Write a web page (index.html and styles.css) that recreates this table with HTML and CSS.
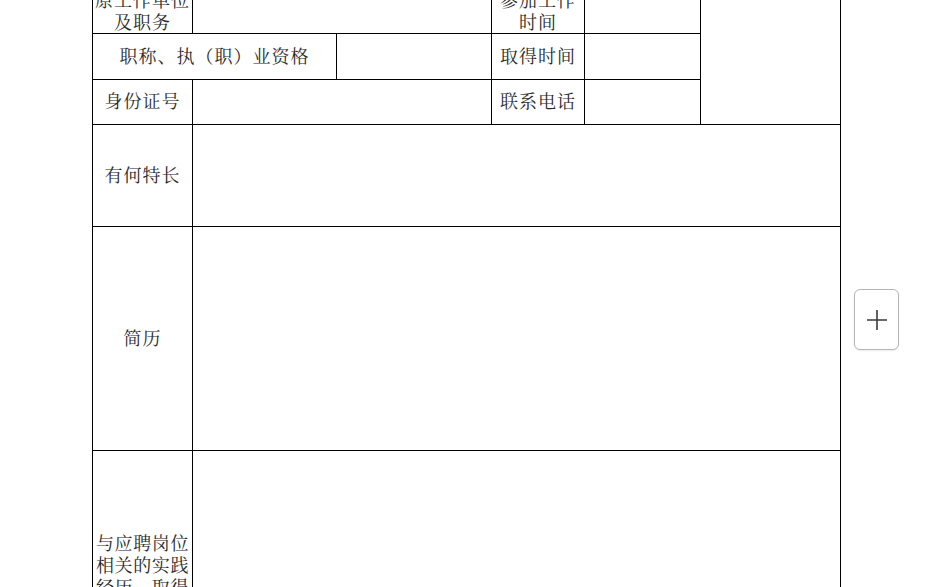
FILE: index.html
```html
<!DOCTYPE html>
<html lang="zh">
<head>
<meta charset="utf-8">
<title>应聘登记表</title>
<link rel="stylesheet" href="styles.css">
</head>
<body>
<div class="page">
  <table class="form">
    <colgroup>
      <col class="c1"><col class="c2"><col class="c3"><col class="c4"><col class="c5"><col class="c6">
    </colgroup>
    <tr class="r1">
      <td class="label">原工作单位<br>及职务</td>
      <td colspan="2"></td>
      <td class="label">参加工作<br>时间</td>
      <td></td>
      <td rowspan="3"></td>
    </tr>
    <tr class="r2">
      <td class="label" colspan="2">职称、执（职）业资格</td>
      <td></td>
      <td class="label">取得时间</td>
      <td></td>
    </tr>
    <tr class="r3">
      <td class="label">身份证号</td>
      <td colspan="2"></td>
      <td class="label">联系电话</td>
      <td></td>
    </tr>
    <tr class="r4">
      <td class="label">有何特长</td>
      <td colspan="5"></td>
    </tr>
    <tr class="r5">
      <td class="label">简历</td>
      <td colspan="5"></td>
    </tr>
    <tr class="r6">
      <td class="label tight">与应聘岗位<br>相关的实践<br>经历、取得<br>的成绩</td>
      <td colspan="5"></td>
    </tr>
  </table>
  <button class="add" type="button" aria-label="添加">
    <svg width="22" height="22" viewBox="0 0 22 22"><path d="M11 1v20M1 11h20" stroke="#3a3a3a" stroke-width="1.6" fill="none"/></svg>
  </button>
</div>
</body>
</html>
```
FILE: styles.css
```css
html, body {
  margin: 0;
  padding: 0;
  background: #fff;
}
.page {
  position: relative;
  width: 948px;
  height: 587px;
  overflow: hidden;
}
.form {
  border-collapse: collapse;
  table-layout: fixed;
  width: 749px;
  margin-left: 92px;
  margin-top: -18px;
  font-family: "Noto Serif CJK SC", "Noto Sans CJK SC", serif;
  font-size: 18px;
  color: #2a2a2a;
}
.c1 { width: 100px; }
.c2 { width: 144px; }
.c3 { width: 155px; }
.c4 { width: 93px; }
.c5 { width: 116px; }
.c6 { width: 140px; }
.form td {
  border: 1px solid #000;
  padding: 0;
  text-align: center;
  vertical-align: middle;
}
.label {
  letter-spacing: 1px;
  line-height: 22px;
}
.form .label {
  padding-bottom: 4px;
}
.form .r1 .label {
  padding-bottom: 0;
  padding-top: 4px;
}
.tight {
  letter-spacing: 0.6px;
}
.r1 { height: 51px; }
.r2 { height: 46px; }
.r3 { height: 45px; }
.r4 { height: 102px; }
.r5 { height: 224px; }
.r6 { height: 252px; }
.add {
  position: absolute;
  left: 854px;
  top: 289px;
  width: 45px;
  height: 61px;
  border: 1px solid #b5b5b5;
  border-radius: 6px;
  background: #fff;
  padding: 0;
  display: flex;
  align-items: center;
  justify-content: center;
  box-shadow: 0 1px 2px rgba(0,0,0,0.08);
}
```
